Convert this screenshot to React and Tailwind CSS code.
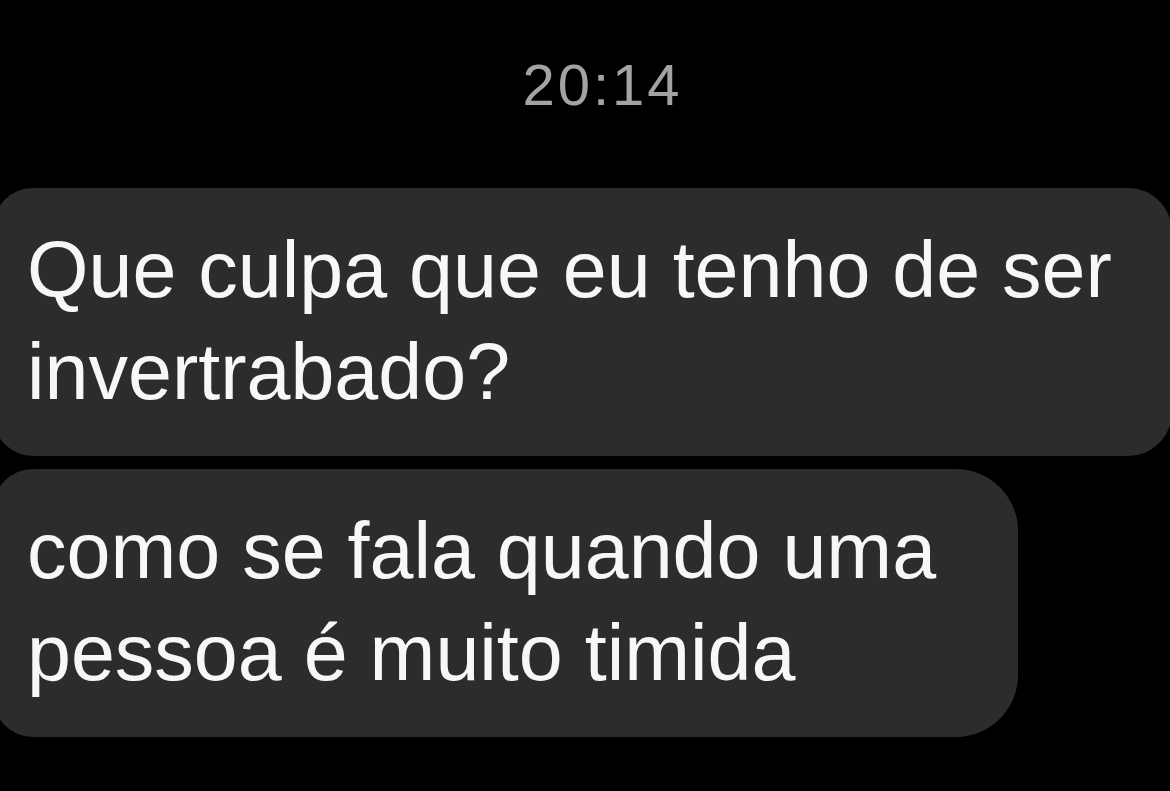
import React from "react";

const messages = [
    {
        id: 1,
        lines: ["Que culpa que eu tenho de ser", "invertrabado?"],
        width: "w-[1179px]",
        corners: "rounded-l-[40px] rounded-r-[44px]",
    },
    {
        id: 2,
        lines: ["como se fala quando uma", "pessoa é muito timida"],
        width: "w-[1025px]",
        corners: "rounded-l-[40px] rounded-r-[62px]",
    },
];

const Bubble = ({ lines, width, corners }) => (
    <div
        className={`${width} ${corners} -ml-[7px] shrink-0 bg-[#2c2c2d] pl-[34px] pr-6 pt-[31px] pb-[33px]`}
    >
        {lines.map((line) => (
            <p key={line} className="whitespace-nowrap text-[79px] leading-[102px] text-[#f7f7f7]">
                {line}
            </p>
        ))}
    </div>
);

export default function App() {
    return (
        <div
            className="w-[1170px] h-[791px] overflow-hidden bg-black"
            style={{ fontFamily: '"Liberation Sans", Arial, sans-serif' }}
        >
            <div className="flex justify-center pl-[35px] pt-[56px]">
                <span className="text-[58px] leading-[58px] tracking-[3px] text-[#a3a3a3]">
                    20:14
                </span>
            </div>

            <div className="mt-[74px] flex flex-col gap-[13px]">
                {messages.map((msg) => (
                    <Bubble key={msg.id} {...msg} />
                ))}
            </div>
        </div>
    );
}
